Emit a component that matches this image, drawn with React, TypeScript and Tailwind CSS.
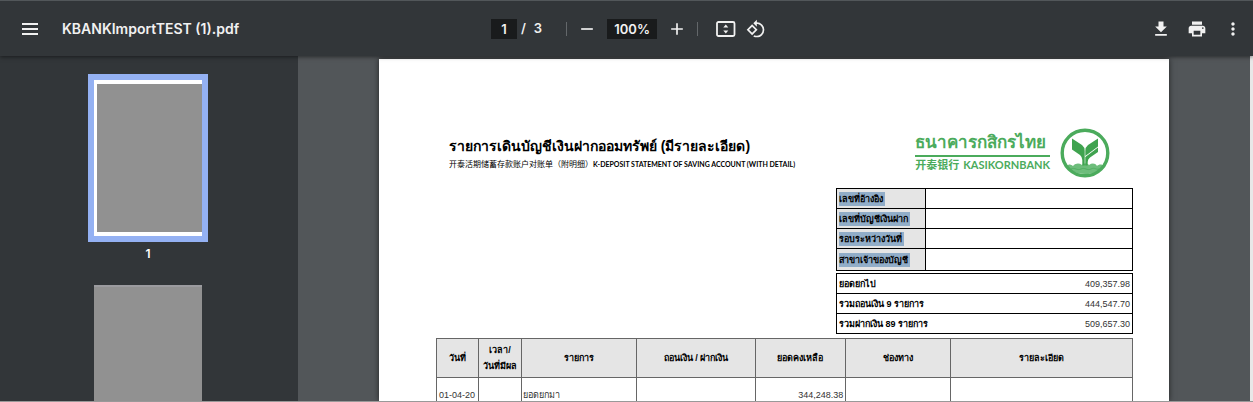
import { MdAdd, MdFileDownload, MdMoreVert, MdPrint, MdRemove, MdRotate90DegreesCcw } from "react-icons/md";

const accountRows = [
	{ label: "เลขที่อ้างอิง", height: "h-5" },
	{ label: "เลขที่บัญชีเงินฝาก", height: "h-5" },
	{ label: "รอบระหว่างวันที่", height: "h-5" },
	{ label: "สาขาเจ้าของบัญชี", height: "h-[22px]" },
];

const summaryRows = [
	{ label: "ยอดยกไป", amount: "409,357.98" },
	{ label: "รวมถอนเงิน 9 รายการ", amount: "444,547.70" },
	{ label: "รวมฝากเงิน 89 รายการ", amount: "509,657.30" },
];

const columns = [
	{ label: "วันที่", width: "w-[6.1%]" },
	{ label: "เวลา/\nวันที่มีผล", width: "w-[6.1%]" },
	{ label: "รายการ", width: "w-[16.6%]" },
	{ label: "ถอนเงิน / ฝากเงิน", width: "w-[17%]" },
	{ label: "ยอดคงเหลือ", width: "w-[13%]" },
	{ label: "ช่องทาง", width: "w-[15.1%]" },
	{ label: "รายละเอียด", width: "w-[26.1%]" },
];

const iconButton = "flex size-8 items-center justify-center";

const FitPageIcon = () => (
	<svg viewBox="0 0 20 16" className="h-4 w-5" fill="none">
		<rect x="1" y="1" width="17.5" height="14" rx="1.5" stroke="currentColor" strokeWidth="1.8" />
		<path d="M9.8 3.4 12.3 6.4H7.3zM9.8 12.6 12.3 9.6H7.3z" fill="currentColor" />
	</svg>
);

const BankLogo = () => (
	<svg viewBox="0 0 50 50" className="size-[50px]" fill="none">
		<path d="M6 38c3-2 5-2 7 0 3-3 6-3 9-1 2-2 5-2 7 0 3-2 6-2 8 1 2-2 5-2 7 0-4 6-10 8-19 8S10 43 6 38z" fill="#6dbd7b" />
		<path d="M11 41c4-2 6 2 10 0s6 2 10 0 5 1 8 0" stroke="#4bab5c" strokeWidth="0.8" />
		<path d="M12 10.5 22 17Q24.700 19 24.700 23V37.500H22.300V32Q22.300 29 20 27L12 21.500z" fill="#3fa34f" />
		<path d="M38 10.5 28 17Q25.300 19 25.300 23V28L38 18.500z" fill="#3fa34f" />
		<path d="M38 19.500 25.300 29V37.500H27.700V34Q27.700 31 30 29.500L38 24z" fill="#3fa34f" />
		<circle cx="25" cy="25" r="22.8" stroke="#4bab5c" strokeWidth="3.4" />
	</svg>
);

const Toolbar = () => {
	return (
		<header className="relative z-10 grid h-14 shrink-0 grid-cols-[1fr_auto_1fr] items-center border-t border-[#52575a] bg-[#323639] text-[#f1f1f1] shadow-[0_1px_4px_rgba(0,0,0,0.5)]">
			<div className="flex items-center gap-4 pl-3.5">
				<button className={iconButton} aria-label="Menu">
					<svg viewBox="0 0 16 12" className="h-3 w-4" fill="currentColor">
						<path d="M0 0h16v2H0zM0 5h16v2H0zM0 10h16v2H0z" />
					</svg>
				</button>
				<h1 className="text-sm font-semibold">KBANKImportTEST (1).pdf</h1>
			</div>
			<div className="flex items-center pl-1 text-[13px] font-semibold">
				<input aria-label="Page" defaultValue="1" className="h-5 w-[26px] bg-[#191b1c] text-center" />
				<span className="ml-1">/</span>
				<span className="ml-2">3</span>
				<span className="ml-6 h-3.5 w-px bg-[#63676a]" />
				<button className="ml-2.5 flex size-5 items-center justify-center" aria-label="Zoom out">
					<MdRemove className="size-5" />
				</button>
				<input aria-label="Zoom" defaultValue="100%" className="ml-2.5 h-5 w-[50px] bg-[#191b1c] text-center" />
				<button className="ml-2.5 flex size-5 items-center justify-center" aria-label="Zoom in">
					<MdAdd className="size-5" />
				</button>
				<span className="ml-2.5 h-3.5 w-px bg-[#63676a]" />
				<button className="ml-[18px]" aria-label="Fit to page">
					<FitPageIcon />
				</button>
				<button className="ml-2.5" aria-label="Rotate">
					<MdRotate90DegreesCcw className="size-5" />
				</button>
			</div>
			<div className="flex items-center justify-end gap-1 pr-1">
				<button className={iconButton} aria-label="Download">
					<MdFileDownload className="size-5" />
				</button>
				<button className={iconButton} aria-label="Print">
					<MdPrint className="size-5" />
				</button>
				<button className={iconButton} aria-label="More">
					<MdMoreVert className="size-5" />
				</button>
			</div>
		</header>
	);
};

const Thumbnails = () => {
	return (
		<aside className="flex w-[298px] shrink-0 flex-col items-center bg-[#323639] pt-[18px] pr-0.5 text-xs font-semibold text-white">
			<button className="border-[6px] border-[#94b1f3]" aria-label="Page 1">
				<div className="h-[156px] w-[108px] border-y-4 border-l-[3px] border-white bg-[#919191]" />
			</button>
			<span className="mt-1">1</span>
			<button className="mt-[23px] h-[156px] w-[108px] shrink-0 border-t-2 border-[#9b9b9f] bg-[#919191]" aria-label="Page 2" />
		</aside>
	);
};

const Statement = () => {
	return (
		<article className="h-full w-[83%] bg-white pr-9 pl-[57px] text-black shadow-[0_0_6px_rgba(0,0,0,0.6)]">
			<div className="flex h-[129px] items-end justify-between pb-2.5 pl-[13px]">
				<div className="pb-2">
					<h2 className="text-sm leading-6 font-bold whitespace-nowrap">รายการเดินบัญชีเงินฝากออมทรัพย์ (มีรายละเอียด)</h2>
					<p className="flex font-['Lato','Noto_Sans_CJK_SC',sans-serif] leading-3 whitespace-nowrap">
						<span className="text-[8px]">开泰活期储蓄存款账户对账单（附明细）</span>
						<b className="text-[7px]">K-DEPOSIT STATEMENT OF SAVING ACCOUNT (WITH DETAIL)</b>
					</p>
				</div>
				<div className="flex items-center gap-2.5 pr-[23px] text-[#4bab5c]">
					<div className="whitespace-nowrap">
						<div className="border-b-2 pb-0.5 text-[17px] leading-5 font-bold">ธนาคารกสิกรไทย</div>
						<div className="flex justify-between gap-1 font-['Lato','Noto_Sans_CJK_SC',sans-serif] text-[11px] leading-4 font-bold">
							<span>开泰银行</span>
							<span>KASIKORNBANK</span>
						</div>
					</div>
					<BankLogo />
				</div>
			</div>

			<div className="ml-auto w-[42.6%] text-[9px] leading-3">
				<table className="w-full table-fixed border-collapse">
					<tbody>
						{accountRows.map((row) => (
							<tr key={row.label} className={row.height}>
								<th className="w-[30%] border border-black bg-[#e5e5e5] px-0.5 py-0 text-left whitespace-nowrap">
									<span className="inline-block bg-[#91adc8] pr-0.5 align-middle leading-[14px]">{row.label}</span>
								</th>
								<td className="border border-black" />
							</tr>
						))}
					</tbody>
				</table>
				<table className="mt-0.5 w-full border-collapse">
					<tbody>
						{summaryRows.map((row) => (
							<tr key={row.label} className="h-5 border border-black">
								<th className="px-0.5 text-left">{row.label}</th>
								<td className="px-0.5 text-right text-[#333]">{row.amount}</td>
							</tr>
						))}
					</tbody>
				</table>
			</div>

			<table className="mt-1 w-full table-fixed border-collapse text-[9px] leading-4">
				<thead>
					<tr className="h-[39px] bg-[#e5e5e5]">
						{columns.map((column) => (
							<th key={column.label} className={`${column.width} border border-[#666] p-0 whitespace-pre-line`}>
								{column.label}
							</th>
						))}
					</tr>
				</thead>
				<tbody>
					<tr className="h-[34px] text-[#333]">
						<td className="border border-[#666] px-0.5 whitespace-nowrap">01-04-20</td>
						<td className="border border-[#666]" />
						<td className="border border-[#666] px-px">ยอดยกมา</td>
						<td className="border border-[#666]" />
						<td className="border border-[#666] px-0.5 text-right">344,248.38</td>
						<td className="border border-[#666]" />
						<td className="border border-[#666]" />
					</tr>
				</tbody>
			</table>
		</article>
	);
};

const App = () => {
	return (
		<div className="flex h-screen flex-col overflow-hidden border-b border-[#999] bg-[#525659] font-['Inter',sans-serif]">
			<Toolbar />
			<div className="flex min-h-0 flex-1">
				<Thumbnails />
				<main className="flex flex-1 justify-center overflow-hidden border-r-3 border-[#e8e8e8] pt-[3px] font-['Liberation_Sans',sans-serif]">
					<Statement />
				</main>
			</div>
		</div>
	);
};

export default App;
